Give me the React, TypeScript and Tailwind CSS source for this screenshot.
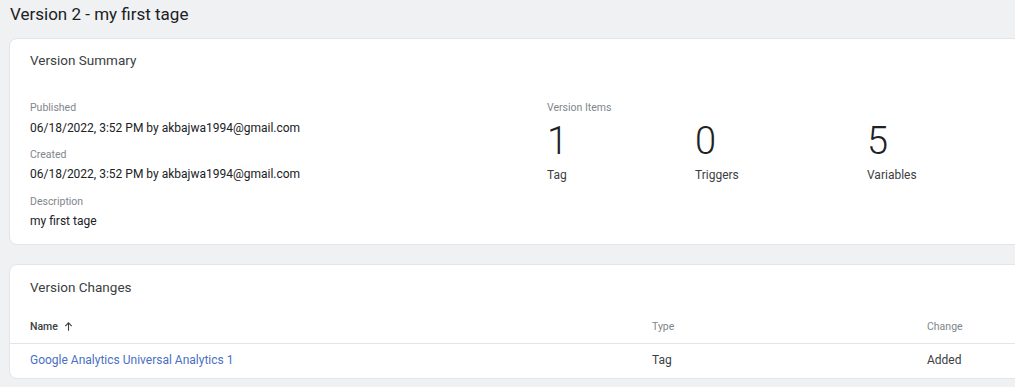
export default function App() {
  const font = { fontFamily: "Roboto, 'Noto Sans', sans-serif" }

  return (
    <div className="w-[1015px] h-[387px] overflow-hidden bg-[#eff1f3] text-[#202124]" style={font}>
      <h1 className="pl-[10px] pt-[2px] h-[38px] text-[17px] leading-[24px] font-normal text-[#202124]">
        Version 2 - my first tage
      </h1>

      {/* Version Summary */}
      <div className="ml-[9px] w-[1030px] h-[207px] bg-white rounded-lg border border-[#e3e5e8] pl-[20px] pt-[11px]">
        <h2 className="text-[13.5px] leading-[20px] text-[#3c4043]">Version Summary</h2>
        <div className="flex mt-[30px]">
          <div className="w-[517px]">
            <div className="text-[10.5px] leading-[16px] text-[#80868b]">Published</div>
            <div className="mt-[3px] text-[12px] leading-[18px] text-[#202124]">
              06/18/2022, 3:52 PM by akbajwa1994@gmail.com
            </div>
            <div className="mt-[10px] text-[10.5px] leading-[16px] text-[#80868b]">Created</div>
            <div className="mt-[2px] text-[12px] leading-[18px] text-[#202124]">
              06/18/2022, 3:52 PM by akbajwa1994@gmail.com
            </div>
            <div className="mt-[11px] text-[10.5px] leading-[16px] text-[#80868b]">Description</div>
            <div className="mt-[2px] text-[12px] leading-[18px] text-[#202124]">my first tage</div>
          </div>
          <div>
            <div className="text-[10.5px] leading-[16px] text-[#80868b]">Version Items</div>
            <div className="flex mt-[3px]">
              {[
                { n: "1", label: "Tag", w: "w-[148px]" },
                { n: "0", label: "Triggers", w: "w-[172px]" },
                { n: "5", label: "Variables", w: "w-[148px]" },
              ].map((item) => (
                <div key={item.label} className={item.w}>
                  <div className="text-[38px] leading-[44px] font-light text-[#202124]">{item.n}</div>
                  <div className="mt-[3px] text-[12px] leading-[18px] text-[#3c4043]">{item.label}</div>
                </div>
              ))}
            </div>
          </div>
        </div>
      </div>

      {/* Version Changes */}
      <div className="ml-[9px] mt-[19px] w-[1030px] h-[115px] bg-white rounded-lg border border-[#e3e5e8]">
        <h2 className="pl-[20px] pt-[12px] text-[13.5px] leading-[20px] text-[#3c4043]">Version Changes</h2>
        <div className="flex items-center h-[47px] pt-[13px] border-b border-[#e3e5e8] text-[10.5px] text-[#5f6368]">
          <div className="w-[642px] pl-[20px] flex items-center gap-[5px] font-medium text-[#3c4043]">
            Name
            <svg width="11" height="11" viewBox="0 0 24 24" fill="none" stroke="#3c4043" strokeWidth="2.4">
              <path d="M12 21V4M5 11l7-7 7 7" />
            </svg>
          </div>
          <div className="w-[275px] text-[#80868b]">Type</div>
          <div className="text-[#80868b]">Change</div>
        </div>
        <div className="flex items-center h-[32px] text-[12px]">
          <div className="w-[642px] pl-[20px] text-[#4a6fc3]">Google Analytics Universal Analytics 1</div>
          <div className="w-[275px] text-[#3c4043]">Tag</div>
          <div className="text-[#3c4043]">Added</div>
        </div>
      </div>
    </div>
  )
}
